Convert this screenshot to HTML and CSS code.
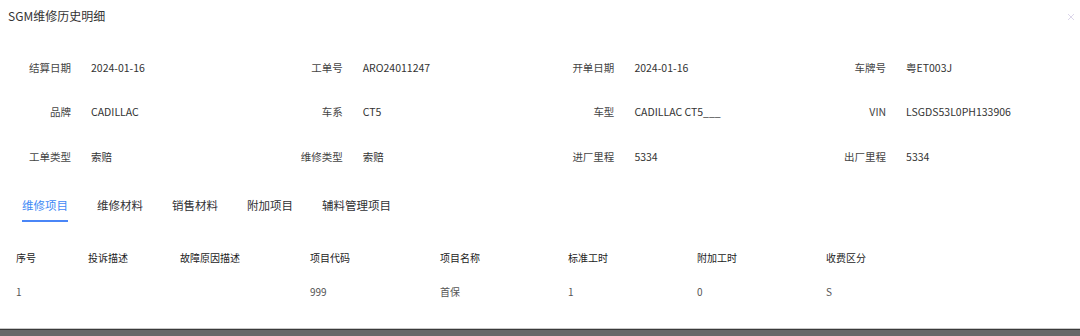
FILE: index.html
```html
<!DOCTYPE html>
<html lang="zh-CN">
<head>
    <meta charset="UTF-8">
    <meta name="viewport" content="width=device-width, initial-scale=1.0">
    <title>SGM维修历史明细</title>
    <link rel="stylesheet" href="styles.css">
</head>
<body>
    <div class="dialog">
        <div class="dialog-header">
            <span class="dialog-title">SGM维修历史明细</span>
            <svg class="close" width="8" height="8" viewBox="0 0 8 8">
                <path d="M1 1L7 7M7 1L1 7" stroke="#dcd6ea" stroke-width="1"/>
            </svg>
        </div>

        <div class="info">
            <div class="field"><span class="label">结算日期</span><span class="value">2024-01-16</span></div>
            <div class="field"><span class="label">工单号</span><span class="value">ARO24011247</span></div>
            <div class="field"><span class="label">开单日期</span><span class="value">2024-01-16</span></div>
            <div class="field"><span class="label">车牌号</span><span class="value">粤ET003J</span></div>

            <div class="field"><span class="label">品牌</span><span class="value">CADILLAC</span></div>
            <div class="field"><span class="label">车系</span><span class="value">CT5</span></div>
            <div class="field"><span class="label">车型</span><span class="value">CADILLAC CT5___</span></div>
            <div class="field"><span class="label">VIN</span><span class="value">LSGDS53L0PH133906</span></div>

            <div class="field"><span class="label">工单类型</span><span class="value">索赔</span></div>
            <div class="field"><span class="label">维修类型</span><span class="value">索赔</span></div>
            <div class="field"><span class="label">进厂里程</span><span class="value">5334</span></div>
            <div class="field"><span class="label">出厂里程</span><span class="value">5334</span></div>
        </div>

        <div class="tabs">
            <span class="tab active">维修项目</span>
            <span class="tab">维修材料</span>
            <span class="tab">销售材料</span>
            <span class="tab">附加项目</span>
            <span class="tab">辅料管理项目</span>
        </div>

        <div class="table">
            <div class="row head">
                <span>序号</span>
                <span>投诉描述</span>
                <span>故障原因描述</span>
                <span>项目代码</span>
                <span>项目名称</span>
                <span>标准工时</span>
                <span>附加工时</span>
                <span>收费区分</span>
            </div>
            <div class="row">
                <span>1</span>
                <span></span>
                <span></span>
                <span>999</span>
                <span>首保</span>
                <span>1</span>
                <span>0</span>
                <span>S</span>
            </div>
        </div>
    </div>
    <div class="bottom-bar"></div>
</body>
</html>
```

FILE: styles.css
```css
body {
    margin: 0;
    height: 100vh;
    display: flex;
    flex-direction: column;
    font-family: "Noto Sans CJK SC", "Noto Sans", sans-serif;
    color: #333;
    background-color: #fff;
    overflow: hidden;
}
.dialog {
    flex: 1;
}
.dialog-header {
    height: 30px;
    display: flex;
    align-items: center;
    justify-content: space-between;
    padding: 0 5px 0 8px;
}
.dialog-title {
    font-size: 12px;
    color: #333;
}
.close {
    margin-top: 4px;
}
.info {
    display: grid;
    grid-template-columns: repeat(4, 271.7px);
    grid-auto-rows: 44.5px;
    margin-top: 15px;
}
.field {
    display: flex;
    align-items: center;
    font-size: 10.5px;
}
.label {
    width: 71px;
    text-align: right;
    color: #444;
}
.value {
    padding-left: 20px;
    color: #333;
}
.tabs {
    display: flex;
    gap: 29px;
    padding-left: 22px;
}
.tab {
    font-size: 11.5px;
    line-height: 18px;
    padding: 17px 0 6px;
    border-bottom: 2px solid transparent;
    color: #303133;
}
.tab.active {
    color: #4089f5;
    border-bottom-color: #4a86f7;
}
.table {
    margin-top: 19px;
}
.row {
    display: grid;
    grid-template-columns: 72px 92px 130px 130px 128px 129px 129px 1fr;
    padding-left: 16px;
    height: 34px;
    align-items: center;
    font-size: 10px;
    color: #555;
}
.row.head {
    color: #222;
}
.bottom-bar {
    height: 8px;
    background-color: #686868;
    border-top: 1px solid #c8c8c8;
    box-shadow: inset 0 1px 0 #3a3a3a;
    box-sizing: border-box;
}
```
